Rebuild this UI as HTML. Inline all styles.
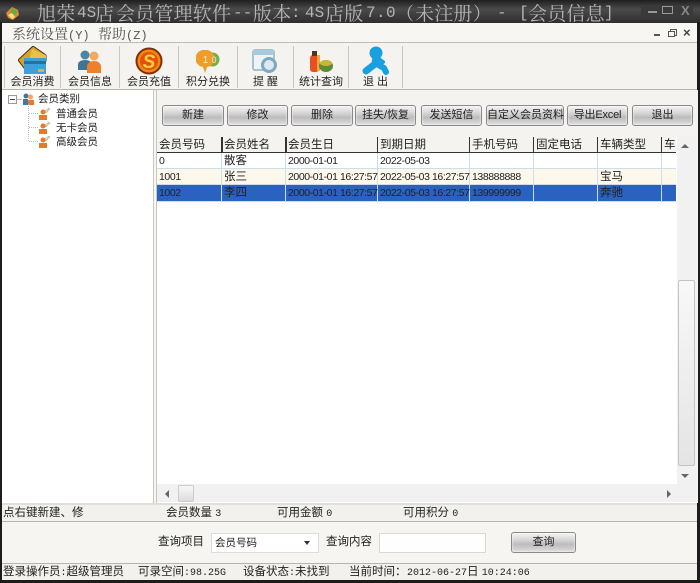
<!DOCTYPE html>
<html><head><meta charset="utf-8">
<style>
html,body{margin:0;padding:0;background:#fff}
#w{position:relative;width:700px;height:583px;overflow:hidden;background:#f6f5f2;font-family:"Liberation Sans","WenQuanYi Zen Hei","Noto Sans CJK SC",sans-serif;font-size:11px;color:#222}
#w div{position:absolute;white-space:nowrap}
.m{font-family:"Liberation Mono",monospace;font-size:10px}
.t{top:2px;height:22px;line-height:22px;font-family:"Noto Serif CJK SC",serif;font-size:19px;color:#b5b5b5;letter-spacing:.2px}
.tl{top:2px;height:22px;line-height:22px;font-family:"Liberation Mono",monospace;font-size:16px;color:#b5b5b5}
.tb{top:75px;font-size:11px;text-align:center;color:#222;height:14px;line-height:14px}
.sep{top:46px;height:42px;width:1px;background:#c9c7c2}
.btn{top:105px;height:19px;border:1px solid #8a8a8a;border-radius:3px;background:linear-gradient(#f4f4f4 0%,#d8d8d8 35%,#bcbcbc 60%,#dedede 100%);text-align:center;line-height:19px;font-size:11px;color:#222;box-shadow:inset 0 0 2px #fff}
.h{top:138px;height:15px;line-height:15px;font-size:11.5px;color:#222;padding-left:2px}
.hs{top:137px;height:16px;width:2px;background:#333}
.c{height:15px;line-height:16px;font-size:10.5px;color:#222;padding-left:2px;letter-spacing:-.42px}
.cj{letter-spacing:0;font-size:11.5px}
.vl{width:1px;background:#cfdceb}
.tr{font-size:10.5px;color:#222;height:14px;line-height:14px}
.st{height:15px;line-height:15px;font-size:11.5px;top:565px}
.s2{height:14px;line-height:14px;font-size:11.5px;top:506px}
</style></head><body>
<div id="w">
<!-- title bar -->
<div style="left:0;top:0;width:700px;height:23px;background:linear-gradient(#1f1f1f,#4a4a4a 40%,#2e2e2e)"></div>
<svg style="position:absolute;left:5px;top:5px" width="16" height="16" viewBox="0 0 16 16"><path d="M1 8L7 2 13 5 14 10 8 15 3 13Z" fill="#e8862c"/><path d="M7 3L13 6 10 10 5 7Z" fill="#5fae4a"/><path d="M3 10L7 8 10 12 7 14Z" fill="#f6e08a"/></svg>
<div class="t" style="left:37px">旭荣</div>
<div class="tl" style="left:77px">4S</div>
<div class="t" style="left:95px">店</div>
<div class="t" style="left:116px">会员管理软件</div>
<div class="tl" style="left:233px">--</div>
<div class="t" style="left:253px">版本</div>
<div class="tl" style="left:291px">:</div>
<div class="tl" style="left:305px">4S</div>
<div class="t" style="left:325px">店版</div>
<div class="tl" style="left:366px;letter-spacing:.4px">7.0</div>
<div class="t" style="left:415px">未注册</div>
<div class="t" style="left:396px;font-size:18px">（</div>
<div class="t" style="left:473px;font-size:18px">）</div>
<div class="tl" style="left:497px">-</div>
<div class="tl" style="left:519px">[</div>
<div class="t" style="left:528px">会员信息</div>
<div class="tl" style="left:604px">]</div>
<div style="left:641px;top:5px;width:52px;height:11px;background:#3a3a3a"></div>
<div style="left:648px;top:11px;width:9px;height:2px;background:#999"></div>
<div style="left:662px;top:6px;width:9px;height:6px;border:1px solid #999"></div>
<div style="left:681px;top:3px;font-size:13px;color:#888;font-weight:bold;line-height:15px">X</div>
<!-- frame -->
<div style="left:0;top:22px;width:2px;height:561px;background:#1c1c1c"></div>
<div style="left:697px;top:22px;width:3px;height:561px;background:#1c1c1c"></div>
<div style="left:0;top:580px;width:700px;height:3px;background:#1c1c1c"></div>
<!-- menu -->
<div style="left:2px;top:23px;width:695px;height:19px;background:#f7f6f3;border-bottom:1px solid #bdbcb8"></div>
<div style="left:12px;top:25px;height:18px;line-height:18px;font-size:14px;color:#555;font-family:'Noto Serif CJK SC',serif">系统设置<span style="font-family:'Liberation Mono',monospace;font-size:12px">(Y)</span></div>
<div style="left:98px;top:25px;height:18px;line-height:18px;font-size:14px;color:#555;font-family:'Noto Serif CJK SC',serif">帮助<span style="font-family:'Liberation Mono',monospace;font-size:12px">(Z)</span></div>
<div style="left:654px;top:34px;width:6px;height:2px;background:#555"></div>
<div style="left:670px;top:29px;width:5px;height:5px;border:1px solid #555"></div>
<div style="left:668px;top:31px;width:5px;height:4px;border:1px solid #555;background:#f7f6f3"></div>
<div style="left:683px;top:25px;font-size:13px;font-weight:bold;color:#444">×</div>
<!-- toolbar -->
<div style="left:2px;top:43px;width:695px;height:46px;background:#f4f3ef;border-bottom:1px solid #b5b4b0"></div>
<div class="sep" style="left:4px"></div><div class="sep" style="left:60px"></div><div class="sep" style="left:119px"></div><div class="sep" style="left:178px"></div><div class="sep" style="left:237px"></div><div class="sep" style="left:293px"></div><div class="sep" style="left:348px"></div><div class="sep" style="left:402px"></div>
<!-- card icon -->
<svg style="position:absolute;left:18px;top:46px" width="30" height="30" viewBox="0 0 30 30"><path d="M0 14L15 0 28 9 28 15 10 15 6 22Z" fill="#d8a12c" stroke="#3c3010"/><path d="M14 3L28 9 28 15 11 15Z" fill="#e9c04a"/><path d="M6 12H28V28H6Z" fill="#3f9fd8"/><rect x="6" y="15" width="22" height="3" fill="#2c6e9e"/><rect x="20" y="23" width="6" height="3" fill="#e8a07a"/></svg>
<!-- members icon -->
<svg style="position:absolute;left:78px;top:50px" width="24" height="23" viewBox="0 0 24 23"><circle cx="7" cy="5" r="4.500" fill="#4a86a8"/><path d="M0 20V14Q1 10 7 10T13 14V20Z" fill="#3c7596"/><circle cx="16" cy="6" r="4.500" fill="#f6a85c"/><path d="M9 23V16Q10 11 16 11T23 16V23Z" fill="#ee7f2d"/></svg>
<!-- coin -->
<svg style="position:absolute;left:135px;top:47px" width="28" height="28" viewBox="0 0 28 28"><circle cx="14" cy="14" r="12.500" fill="#e8900e" stroke="#8a2a08" stroke-width="2"/><circle cx="14" cy="14" r="9" fill="#e64f10"/><text x="14" y="21" text-anchor="middle" font-family="Liberation Sans" font-size="19" font-weight="bold" font-style="italic" fill="#ffd23c">S</text></svg>
<!-- balloons -->
<svg style="position:absolute;left:196px;top:50px" width="25" height="24" viewBox="0 0 25 24"><circle cx="16.500" cy="9.500" r="7" fill="#7aae4a"/><path d="M9 0A8.500 8.500 0 0 1 11 17L9 23 7 17A8.500 8.500 0 0 1 9 0Z" fill="#ee9c2c"/><text x="9.500" y="13" text-anchor="middle" font-size="10" fill="#fff6c0" font-family="Liberation Sans">1</text><text x="18" y="13" text-anchor="middle" font-size="9" fill="#e8f4c0" font-family="Liberation Sans">0</text></svg>
<!-- reminder -->
<svg style="position:absolute;left:252px;top:48px" width="26" height="26" viewBox="0 0 26 26"><rect x="1" y="2" width="21" height="20" rx="2" fill="#eef3f6" stroke="#8fb2c6" stroke-width="1.500"/><rect x="1" y="2" width="21" height="5" fill="#a9c9dc"/><circle cx="17" cy="17" r="8" fill="#7fa9c2"/><circle cx="17" cy="17" r="5" fill="#dde9ef"/></svg>
<!-- stats -->
<svg style="position:absolute;left:308px;top:49px" width="26" height="24" viewBox="0 0 26 24"><rect x="2" y="6" width="9" height="17" rx="3" fill="#e84f22"/><rect x="4" y="2" width="5" height="5" fill="#4a3a20"/><path d="M9 6H12V22H9Z" fill="#f4a83a"/><ellipse cx="18" cy="17" rx="7" ry="6" fill="#5a8a3a"/><ellipse cx="18" cy="14" rx="6" ry="3" fill="#c8b83a"/></svg>
<!-- exit man -->
<svg style="position:absolute;left:362px;top:46px" width="28" height="30" viewBox="0 0 28 30"><circle cx="14" cy="7" r="6.500" fill="#18a0e0"/><path d="M14 10L13 18 4 25" fill="none" stroke="#18a0e0" stroke-width="7" stroke-linecap="round" stroke-linejoin="round"/><path d="M13 17L22 22 24 26" fill="none" stroke="#18a0e0" stroke-width="6" stroke-linecap="round" stroke-linejoin="round"/><path d="M15 12L21 16" fill="none" stroke="#18a0e0" stroke-width="4" stroke-linecap="round"/></svg>
<div class="tb" style="left:5px;width:55px">会员消费</div>
<div class="tb" style="left:61px;width:58px">会员信息</div>
<div class="tb" style="left:120px;width:58px">会员充值</div>
<div class="tb" style="left:179px;width:58px">积分兑换</div>
<div class="tb" style="left:238px;width:55px">提&nbsp;醒</div>
<div class="tb" style="left:294px;width:54px">统计查询</div>
<div class="tb" style="left:349px;width:53px">退&nbsp;出</div>
<!-- left panel -->
<div style="left:2px;top:90px;width:151px;height:413px;background:#fff;border-right:1px solid #c8c7c3"></div>
<div style="left:8px;top:95px;width:7px;height:7px;border:1px solid #999;background:#fff"></div>
<div style="left:10px;top:99px;width:5px;height:1px;background:#444"></div>
<div style="left:17px;top:99px;width:5px;height:1px;background:#bbb"></div>
<svg style="position:absolute;left:22px;top:93px" width="12" height="12" viewBox="0 0 12 12"><circle cx="4" cy="3" r="2.500" fill="#3c7aa0"/><rect x="1" y="6" width="5" height="6" fill="#3c7aa0"/><circle cx="8.500" cy="4" r="2.500" fill="#f5a75c"/><rect x="6" y="7" width="6" height="5" fill="#e8792c"/></svg>
<div class="tr" style="left:38px;top:92px">会员类别</div>
<div style="left:28px;top:104px;width:1px;height:37px;border-left:1px dotted #bbb"></div>
<div style="left:29px;top:113px;width:9px;border-top:1px dotted #bbb"></div><div style="left:29px;top:127px;width:9px;border-top:1px dotted #bbb"></div><div style="left:29px;top:141px;width:9px;border-top:1px dotted #bbb"></div>
<svg style="position:absolute;left:38px;top:107px" width="13" height="13" viewBox="0 0 13 13"><circle cx="5" cy="5" r="2.500" fill="#e8792c"/><rect x="1" y="8" width="8" height="5" fill="#e8792c"/><path d="M7 4L11 1 12 2 8 6Z" fill="#e8d8a0" stroke="#998" stroke-width=".5"/></svg>
<svg style="position:absolute;left:38px;top:121px" width="13" height="13" viewBox="0 0 13 13"><circle cx="5" cy="5" r="2.500" fill="#e8792c"/><rect x="1" y="8" width="8" height="5" fill="#e8792c"/><path d="M7 4L11 1 12 2 8 6Z" fill="#e8d8a0" stroke="#998" stroke-width=".5"/></svg>
<svg style="position:absolute;left:38px;top:135px" width="13" height="13" viewBox="0 0 13 13"><circle cx="5" cy="5" r="2.500" fill="#e8792c"/><rect x="1" y="8" width="8" height="5" fill="#e8792c"/><path d="M7 4L11 1 12 2 8 6Z" fill="#e8d8a0" stroke="#998" stroke-width=".5"/></svg>
<div class="tr" style="left:56px;top:107px">普通会员</div>
<div class="tr" style="left:56px;top:121px">无卡会员</div>
<div class="tr" style="left:56px;top:135px">高级会员</div>
<!-- right panel -->
<div style="left:156px;top:90px;width:541px;height:413px;background:#f4f3ef;border-left:1px solid #c8c7c3"></div>
<div class="btn" style="left:162px;width:60px">新建</div>
<div class="btn" style="left:227px;width:59px">修改</div>
<div class="btn" style="left:291px;width:60px">删除</div>
<div class="btn" style="left:355px;width:59px">挂失/恢复</div>
<div class="btn" style="left:421px;width:59px">发送短信</div>
<div class="btn" style="left:486px;width:76px">自定义会员资料</div>
<div class="btn" style="left:567px;width:59px;letter-spacing:-.2px">导出Excel</div>
<div class="btn" style="left:632px;width:59px">退出</div>
<!-- grid -->
<div style="left:157px;top:136px;width:539px;height:367px;background:#fff"></div>
<div style="left:157px;top:136px;width:519px;height:17px;background:#f4f3ef;border-bottom:1px solid #333;box-sizing:border-box"></div>
<div class="h" style="left:157px">会员号码</div>
<div class="h" style="left:222px">会员姓名</div>
<div class="h" style="left:286px">会员生日</div>
<div class="h" style="left:378px">到期日期</div>
<div class="h" style="left:470px">手机号码</div>
<div class="h" style="left:534px">固定电话</div>
<div class="h" style="left:598px">车辆类型</div>
<div class="h" style="left:662px">车</div>
<div class="hs" style="left:221px"></div><div class="hs" style="left:285px"></div><div class="hs" style="left:377px;width:1px"></div><div class="hs" style="left:469px;width:1px"></div><div class="hs" style="left:533px;width:1px"></div><div class="hs" style="left:597px;width:1px"></div><div class="hs" style="left:661px;width:1px"></div>
<div style="left:157px;top:168px;width:519px;height:1px;background:#cfdceb"></div>
<div style="left:157px;top:169px;width:519px;height:15px;background:#fdf8ec"></div>
<div style="left:157px;top:184px;width:519px;height:1px;background:#cfdceb"></div>
<div style="left:157px;top:185px;width:519px;height:16px;background:#2a62c0"></div>
<div style="left:157px;top:201px;width:519px;height:1px;background:#cfdceb"></div>
<div class="vl" style="left:221px;top:153px;height:48px"></div><div class="vl" style="left:285px;top:153px;height:48px"></div><div class="vl" style="left:377px;top:153px;height:48px"></div><div class="vl" style="left:469px;top:153px;height:48px"></div><div class="vl" style="left:533px;top:153px;height:48px"></div><div class="vl" style="left:597px;top:153px;height:48px"></div><div class="vl" style="left:661px;top:153px;height:48px"></div>
<div class="c" style="left:157px;top:153px">0</div><div class="c cj" style="left:222px;top:153px">散客</div><div class="c" style="left:286px;top:153px">2000-01-01</div><div class="c" style="left:378px;top:153px">2022-05-03</div>
<div class="c" style="left:157px;top:169px">1001</div><div class="c cj" style="left:222px;top:169px">张三</div><div class="c" style="left:286px;top:169px">2000-01-01 16:27:57</div><div class="c" style="left:378px;top:169px">2022-05-03 16:27:57</div><div class="c" style="left:470px;top:169px">138888888</div><div class="c cj" style="left:598px;top:169px">宝马</div>
<div class="c" style="left:157px;top:185px">1002</div><div class="c cj" style="left:222px;top:185px">李四</div><div class="c" style="left:286px;top:185px">2000-01-01 16:27:57</div><div class="c" style="left:378px;top:185px">2022-05-03 16:27:57</div><div class="c" style="left:470px;top:185px">139999999</div><div class="c cj" style="left:598px;top:185px">奔驰</div>
<!-- v scrollbar -->
<div style="left:677px;top:136px;width:19px;height:348px;background:#f1f1f1"></div>
<div style="left:681px;top:144px;width:0;height:0;border:4px solid transparent;border-bottom:4px solid #666;border-top:0"></div>
<div style="left:678px;top:280px;width:15px;height:184px;border:1px solid #c4c4c4;border-radius:2px;background:linear-gradient(#f8f8f8,#e4e4e4)"></div>
<div style="left:681px;top:474px;width:0;height:0;border:4px solid transparent;border-top:4px solid #666;border-bottom:0"></div>
<!-- h scrollbar -->
<div style="left:157px;top:484px;width:539px;height:18px;background:#f1f1f1"></div>
<div style="left:165px;top:490px;width:0;height:0;border:4px solid transparent;border-right:4px solid #666;border-left:0"></div>
<div style="left:178px;top:485px;width:14px;height:15px;border:1px solid #ccc;border-radius:2px;background:linear-gradient(#f8f8f8,#dcdcdc)"></div>
<div style="left:667px;top:490px;width:0;height:0;border:4px solid transparent;border-left:4px solid #666;border-right:0"></div>
<!-- summary status -->
<div style="left:2px;top:503px;width:695px;height:2px;background:#dededa"></div>
<div style="left:2px;top:505px;width:695px;height:16px;background:#f2f1ed;border-bottom:1px solid #b5b4b0"></div>
<div class="s2" style="left:3px">点右键新建、修</div>
<div class="s2" style="left:166px">会员数量 <span class="m">3</span></div>
<div class="s2" style="left:277px">可用金额 <span class="m">0</span></div>
<div class="s2" style="left:403px">可用积分 <span class="m">0</span></div>
<!-- query -->
<div style="left:2px;top:522px;width:695px;height:41px;background:#f6f5f2;border-bottom:1px solid #b5b4b0"></div>
<div style="left:158px;top:535px;height:14px;line-height:14px;font-size:11.5px">查询项目</div>
<div style="left:211px;top:533px;width:103px;height:18px;background:#fff;border:1px solid #dcdcd8;line-height:18px;font-size:10.5px;padding-left:3px">会员号码</div>
<div style="left:304px;top:541px;width:0;height:0;border:3.500px solid transparent;border-top:4px solid #333;border-bottom:0"></div>
<div style="left:326px;top:535px;height:14px;line-height:14px;font-size:11.5px">查询内容</div>
<div style="left:379px;top:533px;width:105px;height:18px;background:#fff;border:1px solid #d8d8d4"></div>
<div class="btn" style="left:511px;top:532px;width:63px;height:19px">查询</div>
<!-- bottom status -->
<div style="left:2px;top:564px;width:695px;height:16px;background:#f2f1ed"></div>
<div class="st" style="left:3px">登录操作员<span class="m">:</span>超级管理员</div>
<div class="st" style="left:138px">可录空间<span class="m">:98.25G</span></div>
<div class="st" style="left:243px">设备状态<span class="m">:</span>未找到</div>
<div class="st" style="left:349px">当前时间<span style="display:inline-block;width:12px">：</span><span class="m">2012-06-27</span>日 <span class="m">10:24:06</span></div>
</div>
</body></html>
